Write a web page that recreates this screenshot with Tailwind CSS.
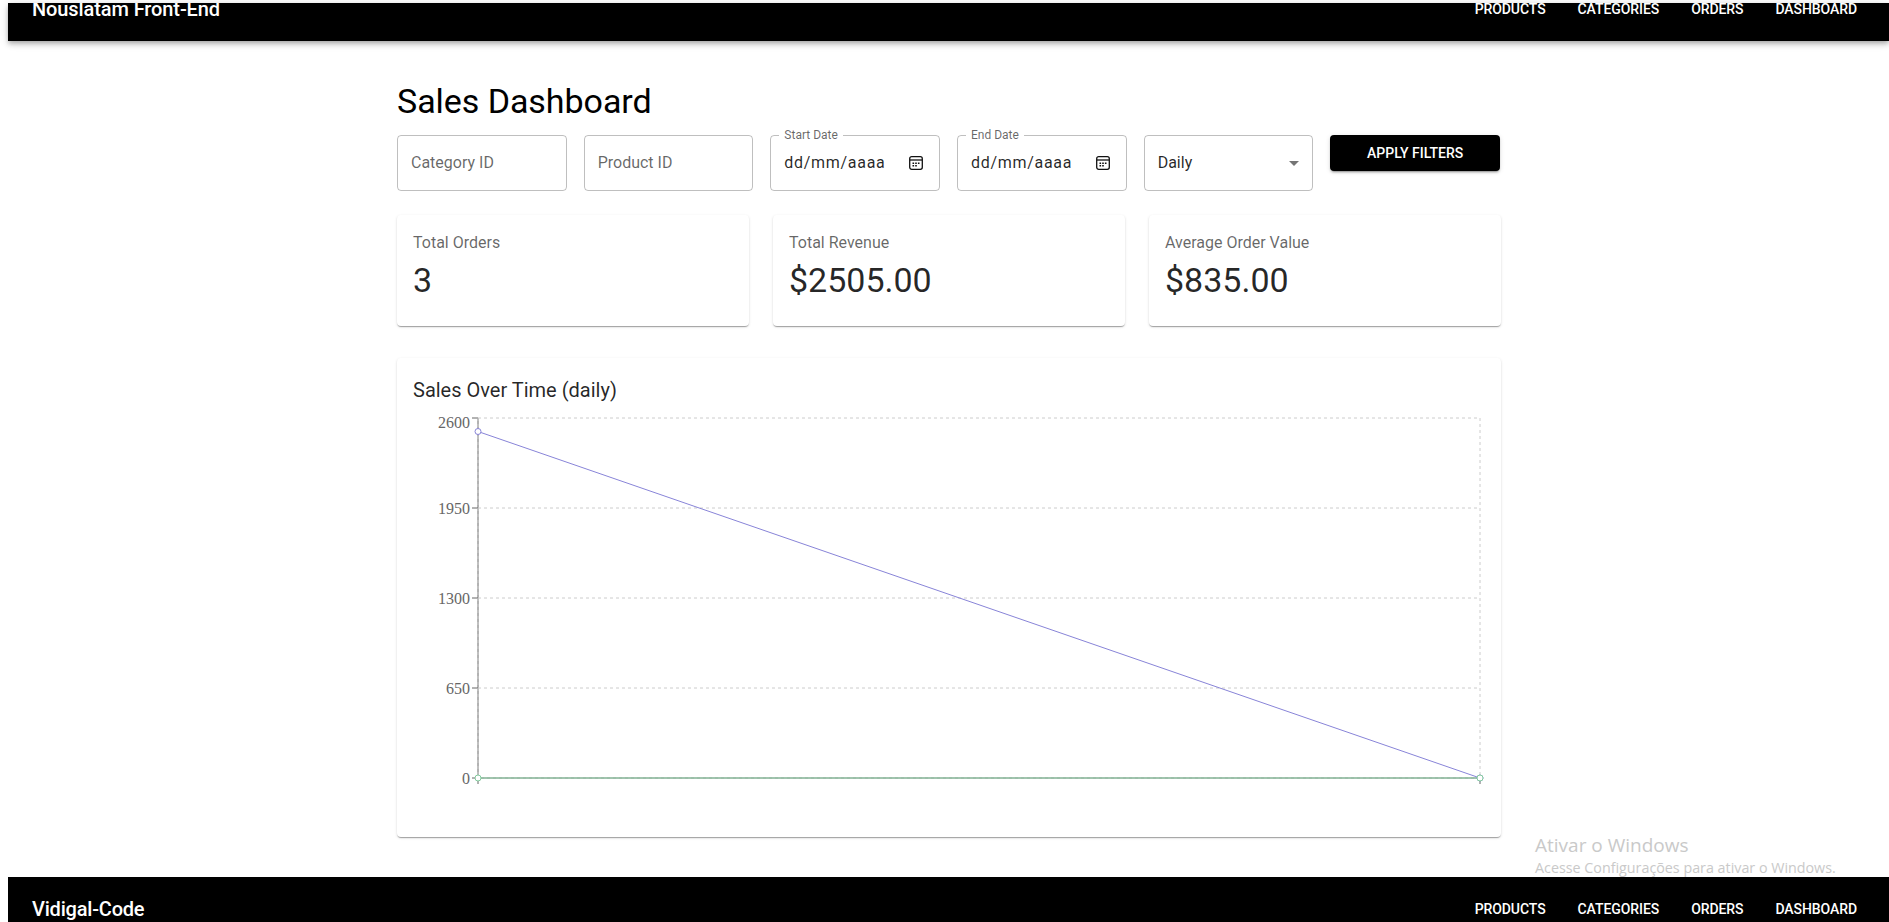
<!DOCTYPE html>
<html lang="en">
<head>
<meta charset="utf-8">
<title>Sales Dashboard</title>
<script src="https://cdn.jsdelivr.net/npm/@tailwindcss/browser@4"></script>
</head>
<body class="h-screen overflow-hidden bg-white font-['Roboto',sans-serif] text-black">
<div class="relative h-[922px] overflow-hidden pl-2">
  <header class="relative z-10 mt-[3px] h-[38px] overflow-hidden bg-black shadow-[0_2px_4px_-1px_rgba(0,0,0,0.2),0_4px_5px_0_rgba(0,0,0,0.14),0_1px_10px_0_rgba(0,0,0,0.12)]">
    <div class="-mt-[26px] flex h-16 items-center justify-between pl-6 pr-8 text-white">
      <span class="text-[20px] font-medium leading-[32px] tracking-[-0.1px]">Nouslatam Front-End</span>
      <nav class="flex gap-8 text-[14px] font-medium leading-[24px] tracking-[-0.08px]">
        <span>PRODUCTS</span><span>CATEGORIES</span><span>ORDERS</span><span>DASHBOARD</span>
      </nav>
    </div>
  </header>

  <main class="ml-[389px] w-[1104px] pt-[39px]">
    <h1 class="mb-[13px] text-[34px] font-normal leading-[42px] tracking-[-0.05px]">Sales Dashboard</h1>

    <div class="mb-6 grid w-[1103px] grid-cols-6 items-start gap-[17px]">
      <div class="flex h-14 items-center rounded border border-black/25 pl-[13px] text-[16px] text-black/60">Category ID</div>
      <div class="flex h-14 items-center rounded border border-black/25 pl-[13px] text-[16px] text-black/60">Product ID</div>

      <div class="relative flex h-14 items-center justify-between rounded border border-black/25 pl-[13px] pr-[16px] text-[16px] text-black/85">
        <span class="absolute -top-[8px] left-[8px] bg-white px-[5px] text-[12px] leading-[14px] text-black/60">Start Date</span>
        <span class="tracking-[0.7px]">dd/mm/aaaa</span>
        <svg class="h-[14px] w-[14px]" viewBox="0 0 14 14" fill="none"><rect x="0.700" y="0.700" width="12.600" height="12.600" rx="2" stroke="#111" stroke-width="1.300"/><path d="M1 4h12" stroke="#111" stroke-width="1.300"/><path d="M3.500 6.500h1.600v1.600H3.500zM6.200 6.500h1.600v1.600H6.200zM8.900 6.500h1.600v1.600H8.900zM3.500 9h1.600v1.600H3.500zM6.200 9h1.600v1.600H6.200z" fill="#111"/></svg>
      </div>

      <div class="relative flex h-14 items-center justify-between rounded border border-black/25 pl-[13px] pr-[16px] text-[16px] text-black/85">
        <span class="absolute -top-[8px] left-[8px] bg-white px-[5px] text-[12px] leading-[14px] text-black/60">End Date</span>
        <span class="tracking-[0.7px]">dd/mm/aaaa</span>
        <svg class="h-[14px] w-[14px]" viewBox="0 0 14 14" fill="none"><rect x="0.700" y="0.700" width="12.600" height="12.600" rx="2" stroke="#111" stroke-width="1.300"/><path d="M1 4h12" stroke="#111" stroke-width="1.300"/><path d="M3.500 6.500h1.600v1.600H3.500zM6.200 6.500h1.600v1.600H6.200zM8.900 6.500h1.600v1.600H8.900zM3.500 9h1.600v1.600H3.500zM6.200 9h1.600v1.600H6.200z" fill="#111"/></svg>
      </div>

      <div class="flex h-14 items-center justify-between rounded border border-black/25 pl-[13px] pr-[6px] text-[16px] text-black/85">
        <span>Daily</span>
        <svg class="h-6 w-6" viewBox="0 0 24 24" fill="#000" fill-opacity="0.54"><path d="M7 10l5 5 5-5z"/></svg>
      </div>

      <button class="flex h-9 items-center justify-center rounded bg-black text-[14px] font-medium text-white shadow-[0_3px_1px_-2px_rgba(0,0,0,0.2),0_2px_2px_0_rgba(0,0,0,0.14),0_1px_5px_0_rgba(0,0,0,0.12)]">APPLY FILTERS</button>
    </div>

    <div class="mb-8 grid grid-cols-3 gap-6">
      <div class="h-[111px] rounded bg-white p-4 shadow-[0_2px_1px_-1px_rgba(0,0,0,0.2),0_1px_1px_0_rgba(0,0,0,0.14),0_1px_3px_0_rgba(0,0,0,0.12)]">
        <p class="mb-[3.600px] text-[16px] leading-6 text-black/60">Total Orders</p>
        <p class="text-[34px] leading-[42px] text-black/85">3</p>
      </div>
      <div class="h-[111px] rounded bg-white p-4 shadow-[0_2px_1px_-1px_rgba(0,0,0,0.2),0_1px_1px_0_rgba(0,0,0,0.14),0_1px_3px_0_rgba(0,0,0,0.12)]">
        <p class="mb-[3.600px] text-[16px] leading-6 text-black/60">Total Revenue</p>
        <p class="text-[34px] leading-[42px] text-black/85">$2505.00</p>
      </div>
      <div class="h-[111px] rounded bg-white p-4 shadow-[0_2px_1px_-1px_rgba(0,0,0,0.2),0_1px_1px_0_rgba(0,0,0,0.14),0_1px_3px_0_rgba(0,0,0,0.12)]">
        <p class="mb-[3.600px] text-[16px] leading-6 text-black/60">Average Order Value</p>
        <p class="text-[34px] leading-[42px] text-black/85">$835.00</p>
      </div>
    </div>

    <section class="h-[479px] rounded bg-white px-4 pt-4 shadow-[0_2px_1px_-1px_rgba(0,0,0,0.2),0_1px_1px_0_rgba(0,0,0,0.14),0_1px_3px_0_rgba(0,0,0,0.12)]">
      <h2 class="mb-[7px] text-[20px] font-normal leading-8 text-black/85">Sales Over Time (daily)</h2>
      <svg class="block" width="1072" height="400" viewBox="0 0 1072 400">
        <g stroke="#666" fill="none">
          <path d="M65 5V365"/>
          <path d="M59 5H65M59 95H65M59 185H65M59 275H65M59 365H65"/>
          <path d="M65 365H1067"/>
          <path d="M65 365V371M1067 365V371"/>
        </g>
        <g stroke="#ccc" stroke-dasharray="3 3" fill="none">
          <path d="M65 5H1067M65 95H1067M65 185H1067M65 275H1067M65 365H1067"/>
          <path d="M65 5V365M1067 5V365"/>
        </g>
        <g fill="#666" font-family="'Liberation Serif',serif" font-size="16" text-anchor="end">
          <text x="57" y="15">2600</text>
          <text x="57" y="101">1950</text>
          <text x="57" y="191">1300</text>
          <text x="57" y="281">650</text>
          <text x="57" y="371">0</text>
        </g>
        <path d="M65 18.500L1067 365" stroke="#8884d8" fill="none"/>
        <path d="M65 365H1067" stroke="#82ca9d" fill="none"/>
        <circle cx="65" cy="18.500" r="3" fill="#fff" stroke="#8884d8"/>
        <circle cx="1067" cy="365" r="3" fill="#fff" stroke="#8884d8"/>
        <circle cx="65" cy="365" r="3" fill="#fff" stroke="#82ca9d"/>
        <circle cx="1067" cy="365" r="3" fill="#fff" stroke="#82ca9d"/>
      </svg>
    </section>
  </main>

  <footer class="mt-10 flex h-16 items-center justify-between bg-black pl-6 pr-8 text-white">
    <span class="text-[20px] font-medium leading-[32px] tracking-[-0.2px]">Vidigal-Code</span>
    <nav class="flex gap-8 text-[14px] font-medium leading-[24px] tracking-[-0.08px]">
      <span>PRODUCTS</span><span>CATEGORIES</span><span>ORDERS</span><span>DASHBOARD</span>
    </nav>
  </footer>

  <div class="absolute left-[1535px] top-[832px] font-['Open_Sans',sans-serif] text-[#c9c9c9]">
    <p class="text-[19px] leading-[26px]">Ativar o Windows</p>
    <p class="text-[14.300px] leading-[20px]">Acesse Configurações para ativar o Windows.</p>
  </div>
</div>
</body>
</html>
